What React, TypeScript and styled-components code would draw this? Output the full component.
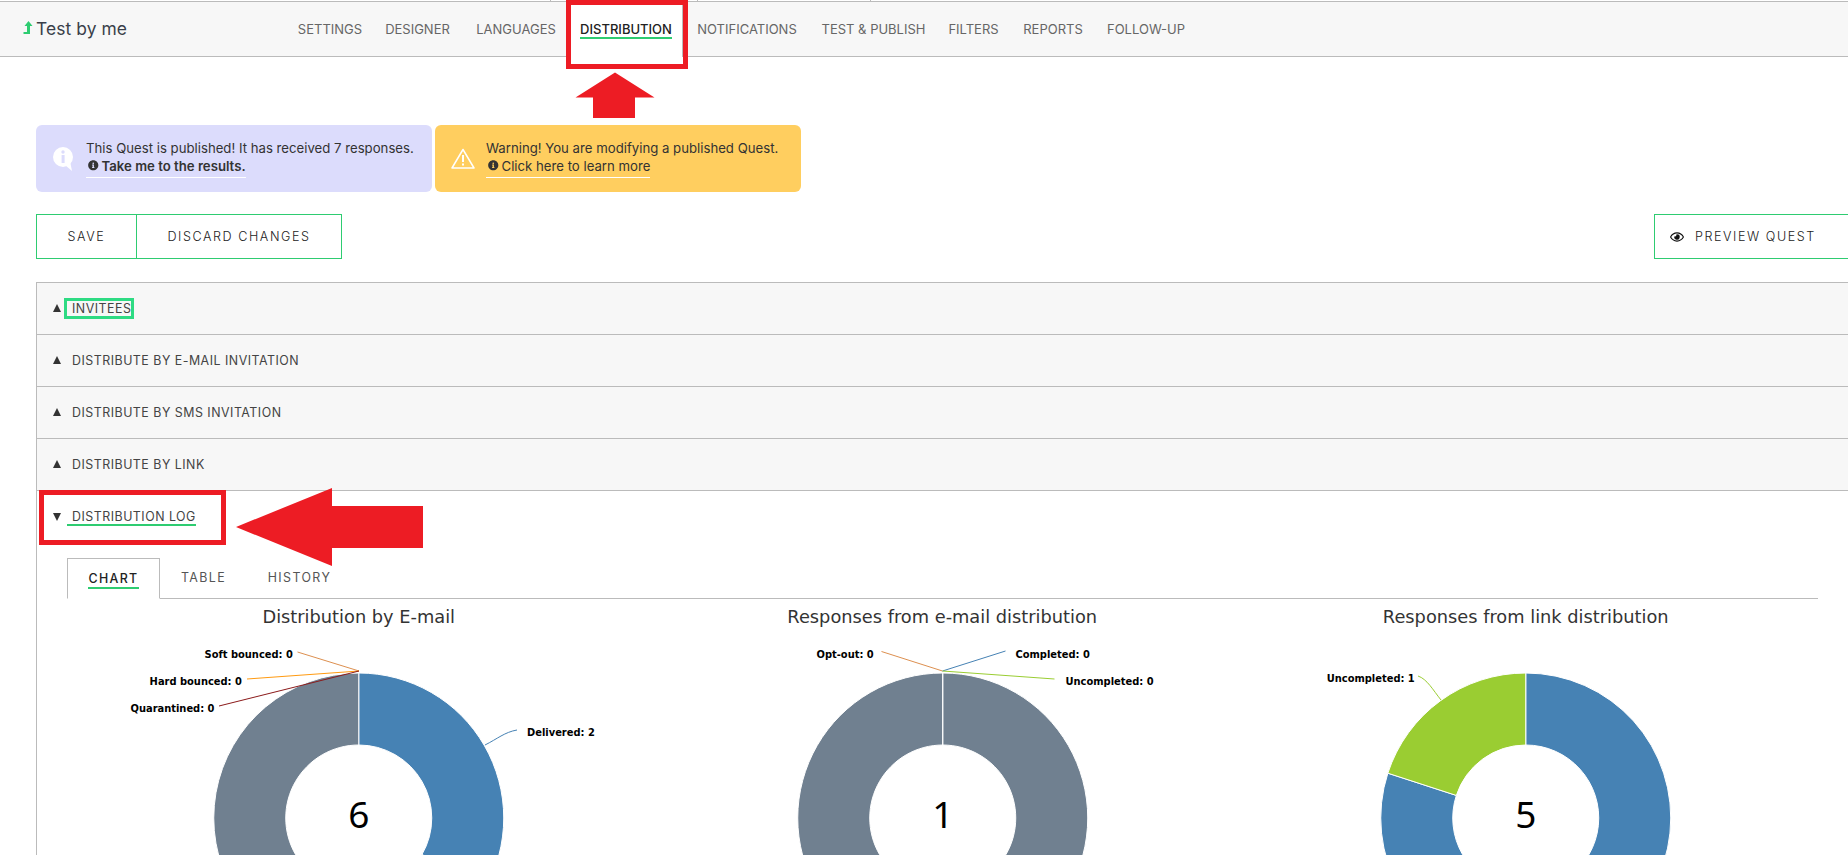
import React from "react";
import styled, { createGlobalStyle } from "styled-components";
import { FaInfoCircle, FaRegEye } from "react-icons/fa";

const GREEN = "#2ecc71";
const LINE = "#bbbbbb";
const UI = `Inter, "Liberation Sans", sans-serif`;
const CHART = `"DejaVu Sans", sans-serif`;

const Global = createGlobalStyle`
  html, body { margin: 0; padding: 0; background: #fff; overflow: hidden; }
  body { font-family: ${UI}; color: #333; }
  * { box-sizing: border-box; }
`;

const Page = styled.div`
  position: relative;
  width: 1848px;
  height: 855px;
  overflow: hidden;
`;

const TopStrip = styled.div`
  position: relative;
  height: 1px;
`;

const Tick = styled.i<{ $x: number }>`
  position: absolute;
  left: ${(p) => p.$x}px;
  top: 0;
  width: 1px;
  height: 1px;
  background: ${LINE};
`;

const TopBar = styled.header`
  height: 56px;
  display: flex;
  align-items: stretch;
  background: #f7f7f7;
  border-top: 1px solid ${LINE};
  border-bottom: 1px solid ${LINE};
  padding-left: 23px;
`;

const Brand = styled.div`
  display: flex;
  align-items: center;
  gap: 3px;
  width: 264px;
  padding-bottom: 2px;
  font-size: 17.4px;
  letter-spacing: 0.1px;
  color: #3a3f4a;
`;

const Nav = styled.nav`
  display: flex;
  align-items: stretch;
`;

const NavItem = styled.div<{ $active?: boolean; $w: number }>`
  width: ${(p) => p.$w}px;
  display: flex;
  justify-content: center;
  padding-top: 20px;
  font-size: 13px;
  line-height: 15px;
  color: ${(p) => (p.$active ? "#222" : "#666")};
  background: ${(p) => (p.$active ? "#fff" : "transparent")};
  border-right: ${(p) => (p.$active ? `1px solid ${LINE}` : "0")};
  margin-bottom: ${(p) => (p.$active ? "-1px" : "0")};
  font-weight: ${(p) => (p.$active ? 500 : 400)};
  white-space: nowrap;
`;

const NavLabel = styled.span<{ $active?: boolean }>`
  display: inline-block;
  height: 17px;
  border-bottom: ${(p) => (p.$active ? `2px solid ${GREEN}` : "0")};
`;

const Main = styled.main`
  width: 1830px;
  margin-left: 36px;
`;

const Alerts = styled.section`
  display: flex;
  gap: 3px;
  padding-top: 68px;
`;

const Alert = styled.div<{ $bg: string; $w: number; $pad: number }>`
  width: ${(p) => p.$w}px;
  height: 67px;
  display: flex;
  align-items: center;
  padding-left: ${(p) => p.$pad}px;
  background: ${(p) => p.$bg};
  border-radius: 6px;
  font-size: 13.2px;
  color: #333;
`;

const AlertIcon = styled.svg<{ $gap: number }>`
  flex: none;
  margin-right: ${(p) => p.$gap}px;
`;

const AlertBody = styled.div`
  line-height: 18px;
  white-space: nowrap;
`;

const AlertLink = styled.span<{ $bold?: boolean }>`
  display: inline-flex;
  align-items: center;
  gap: 3px;
  height: 21px;
  padding: 0 0 3px 2px;
  border-bottom: 1px solid #fff;
  font-weight: ${(p) => (p.$bold ? 600 : 400)};
  svg {
    font-size: 10.5px;
  }
`;

const Actions = styled.section`
  display: flex;
  justify-content: space-between;
  padding-top: 22px;
`;

const ButtonGroup = styled.div`
  display: flex;
  height: 45px;
  border: 1px solid ${GREEN};
`;

const ActionButton = styled.div<{ $w: number; $divider?: boolean }>`
  width: ${(p) => p.$w}px;
  display: flex;
  align-items: center;
  justify-content: center;
  font-size: 12.6px;
  font-weight: 300;
  letter-spacing: 1.55px;
  color: #222;
  border-left: ${(p) => (p.$divider ? `1px solid ${GREEN}` : "0")};
`;

const PreviewButton = styled.div`
  width: 212px;
  height: 45px;
  display: flex;
  align-items: center;
  gap: 11px;
  padding-left: 15px;
  border: 1px solid ${GREEN};
  font-size: 12.6px;
  font-weight: 300;
  letter-spacing: 1.55px;
  color: #222;
  svg {
    font-size: 14px;
    color: #111;
  }
`;

const Accordion = styled.section`
  margin-top: 23px;
  border-top: 1px solid ${LINE};
  border-left: 1px solid ${LINE};
`;

const Row = styled.div<{ $open?: boolean }>`
  height: 52px;
  display: flex;
  align-items: center;
  gap: 11px;
  padding-left: 16px;
  padding-bottom: 1px;
  font-size: 12.4px;
  letter-spacing: 0.5px;
  color: #444;
  background: ${(p) => (p.$open ? "#fff" : "#f7f7f7")};
  border-bottom: ${(p) => (p.$open ? "0" : `1px solid ${LINE}`)};
`;

const Caret = styled.i<{ $open?: boolean }>`
  flex: none;
  width: 0;
  height: 0;
  border-left: 4px solid transparent;
  border-right: 4px solid transparent;
  ${(p) =>
    p.$open ? "border-top: 8px solid #333;" : "border-bottom: 8px solid #333;"}
`;

const Focused = styled.span`
  padding: 1px 0 1px 5px;
  margin-left: -5px;
  line-height: 13px;
  outline: 3px solid #2edb83;
`;

const Underlined = styled.span`
  padding-left: 5px;
  margin-left: -5px;
  height: 17px;
  line-height: 15px;
  border-bottom: 2px solid ${GREEN};
  margin-top: 1px;
`;

const Panel = styled.div`
  padding: 15px 48px 0 30px;
`;

const Tabs = styled.div`
  height: 41px;
  display: flex;
  border-bottom: 1px solid ${LINE};
`;

const Tab = styled.div<{ $active?: boolean; $w: number }>`
  width: ${(p) => p.$w}px;
  height: ${(p) => (p.$active ? "41px" : "40px")};
  display: flex;
  justify-content: center;
  padding-top: 12px;
  font-size: 12.4px;
  letter-spacing: 1.4px;
  color: ${(p) => (p.$active ? "#222" : "#555")};
  font-weight: ${(p) => (p.$active ? 500 : 400)};
  background: #fff;
  ${(p) =>
    p.$active
      ? `border: 1px solid ${LINE}; border-bottom: 1px solid #fff;`
      : ""}
`;

const TabLabel = styled.span<{ $active?: boolean }>`
  height: 18px;
  line-height: 16px;
  border-bottom: ${(p) => (p.$active ? `2px solid ${GREEN}` : "0")};
`;

const Charts = styled.div`
  display: grid;
  grid-template-columns: repeat(3, 583.5px);
`;

const ChartBlock = styled.figure`
  margin: 0;
`;

const ChartTitle = styled.figcaption`
  height: 36px;
  line-height: 36px;
  text-align: center;
  font-family: ${CHART};
  font-size: 17.8px;
  color: #333;
`;

const ChartSvg = styled.svg`
  display: block;
  overflow: visible;
`;

const Label = styled.text`
  font-family: "DejaVu Sans Condensed", "DejaVu Sans", sans-serif;
  font-size: 11px;
  font-weight: 700;
  fill: #000;
`;

const Total = styled.text`
  font-family: "Noto Sans", sans-serif;
  font-size: 37px;
  fill: #000;
`;

const Annotation = styled.div<{ $x: number; $y: number; $w: number; $h: number }>`
  position: absolute;
  left: ${(p) => p.$x}px;
  top: ${(p) => p.$y}px;
  width: ${(p) => p.$w}px;
  height: ${(p) => p.$h}px;
  border: 5px solid #ed1c24;
`;

const AnnotationArrow = styled.svg<{ $x: number; $y: number }>`
  position: absolute;
  left: ${(p) => p.$x}px;
  top: ${(p) => p.$y}px;
`;

const STEEL = "#4682b4";
const SLATE = "#708090";
const LIME = "#9acd32";
const PERU = "#dd9050";

const CX = 291.75;
const CY = 183;
const OUTER = 145;
const INNER = 73;

function point(r: number, deg: number) {
  const a = (deg * Math.PI) / 180;
  return `${(CX + r * Math.sin(a)).toFixed(2)} ${(CY - r * Math.cos(a)).toFixed(2)}`;
}

function slice(from: number, to: number) {
  const large = to - from > 180 ? 1 : 0;
  return `M${point(OUTER, from)} A${OUTER} ${OUTER} 0 ${large} 1 ${point(OUTER, to)} L${point(INNER, to)} A${INNER} ${INNER} 0 ${large} 0 ${point(INNER, from)} Z`;
}

type Slice = { from: number; to: number; color: string };
type Leader = { d: string; color: string };
type Lbl = { x: number; y: number; text: string };

type ChartData = {
  title: string;
  total: string;
  slices: Slice[];
  leaders: Leader[];
  labels: Lbl[];
  origin: number;
};

const OY = 635;

const charts: ChartData[] = [
  {
    title: "Distribution by E-mail",
    total: "6",
    origin: 67,
    slices: [
      { from: 0, to: 120, color: STEEL },
      { from: 120, to: 360, color: SLATE },
    ],
    leaders: [
      { d: "M297.5 652 L359 671", color: PERU },
      { d: "M247 679 L359 671", color: "#ff9a10" },
      { d: "M219 706 L359 671", color: "#8b1a1a" },
      { d: "M517 730 C505 732 497 739 485 745", color: STEEL },
    ],
    labels: [
      { x: 204.5, y: 658, text: "Soft bounced: 0" },
      { x: 149.6, y: 685, text: "Hard bounced: 0" },
      { x: 130.5, y: 712, text: "Quarantined: 0" },
      { x: 527, y: 736, text: "Delivered: 2" },
    ],
  },
  {
    title: "Responses from e-mail distribution",
    total: "1",
    origin: 650.5,
    slices: [{ from: 0, to: 359.99, color: SLATE }],
    leaders: [
      { d: "M881 651.5 L942 671", color: PERU },
      { d: "M1005 651 L942 671", color: STEEL },
      { d: "M1054 679 L942 671", color: LIME },
    ],
    labels: [
      { x: 816, y: 658, text: "Opt-out: 0" },
      { x: 1015, y: 658, text: "Completed: 0" },
      { x: 1065, y: 685, text: "Uncompleted: 0" },
    ],
  },
  {
    title: "Responses from link distribution",
    total: "5",
    origin: 1234,
    slices: [
      { from: 0, to: 288, color: STEEL },
      { from: 288, to: 360, color: LIME },
    ],
    leaders: [{ d: "M1418 676 C1427 679 1433 690 1441 700", color: LIME }],
    labels: [{ x: 1326.7, y: 682, text: "Uncompleted: 1" }],
  },
];

const Chart = ({ data }: { data: ChartData }) => (
  <ChartBlock>
    <ChartTitle>{data.title}</ChartTitle>
    <ChartSvg width="583.5" height="260" viewBox="0 0 583.5 260">
      {data.slices.map((s) => (
        <path key={s.from} d={slice(s.from, s.to)} fill={s.color} stroke="#fff" strokeWidth="1" />
      ))}
      <g transform={`translate(${-data.origin} ${-OY})`}>
        {data.leaders.map((l) => (
          <path key={l.d} d={l.d} fill="none" stroke={l.color} strokeWidth="1" />
        ))}
        {data.labels.map((l) => (
          <Label key={l.text} x={l.x} y={l.y}>
            {l.text}
          </Label>
        ))}
      </g>
      <Total x={CX} y={CY + 10} textAnchor="middle">
        {data.total}
      </Total>
    </ChartSvg>
  </ChartBlock>
);

const navItems: [string, number][] = [
  ["SETTINGS", 86],
  ["DESIGNER", 89],
  ["LANGUAGES", 108],
  ["DISTRIBUTION", 113],
  ["NOTIFICATIONS", 128],
  ["TEST & PUBLISH", 125],
  ["FILTERS", 75],
  ["REPORTS", 84],
  ["FOLLOW-UP", 102],
];

export default function App() {
  return (
    <Page>
      <Global />
      <TopStrip>
        <Tick $x={550} />
        <Tick $x={697} />
        <Tick $x={870} />
      </TopStrip>
      <TopBar>
        <Brand>
          <svg width="10" height="14" viewBox="0 0 10 14">
            <path d="M5.5 0 L9.5 5 L7 5 L7 13 L0.5 13 L0.5 11 L4 11 L4 5 L1.5 5 Z" fill="#2ecc71" />
          </svg>
          Test by me
        </Brand>
        <Nav>
          {navItems.map(([t, w]) => {
            const a = t === "DISTRIBUTION";
            return (
              <NavItem key={t} $active={a} $w={w}>
                <NavLabel $active={a}>{t}</NavLabel>
              </NavItem>
            );
          })}
        </Nav>
      </TopBar>
      <Main>
        <Alerts>
          <Alert $bg="#dcdcfc" $w={396} $pad={17}>
            <AlertIcon $gap={13} width="20" height="24" viewBox="0 0 20 24">
              <circle cx="10" cy="10" r="10" fill="#fff" />
              <path d="M12 18 L19 24 L17 14 Z" fill="#fff" />
              <rect x="8.6" y="8" width="3" height="8" fill="#dcdcfc" />
              <circle cx="10" cy="5" r="1.7" fill="#dcdcfc" />
            </AlertIcon>
            <AlertBody>
              <div>This Quest is published! It has received 7 responses.</div>
              <AlertLink $bold>
                <FaInfoCircle /> Take me to the results.
              </AlertLink>
            </AlertBody>
          </Alert>
          <Alert $bg="#ffce5f" $w={366} $pad={16}>
            <AlertIcon $gap={11} width="24" height="21" viewBox="0 0 24 21">
              <path d="M12 1.5 L23 20 L1 20 Z" fill="none" stroke="#fff" strokeWidth="1.5" strokeLinejoin="round" />
              <rect x="11" y="7" width="2" height="7" fill="#fff" />
              <rect x="11" y="15.5" width="2" height="2" fill="#fff" />
            </AlertIcon>
            <AlertBody>
              <div>Warning! You are modifying a published Quest.</div>
              <AlertLink>
                <FaInfoCircle /> Click here to learn more
              </AlertLink>
            </AlertBody>
          </Alert>
        </Alerts>
        <Actions>
          <ButtonGroup>
            <ActionButton $w={99}>SAVE</ActionButton>
            <ActionButton $w={205} $divider>
              DISCARD CHANGES
            </ActionButton>
          </ButtonGroup>
          <PreviewButton>
            <FaRegEye />
            PREVIEW QUEST
          </PreviewButton>
        </Actions>
        <Accordion>
          <Row>
            <Caret />
            <Focused>INVITEES</Focused>
          </Row>
          <Row>
            <Caret />
            DISTRIBUTE BY E-MAIL INVITATION
          </Row>
          <Row>
            <Caret />
            DISTRIBUTE BY SMS INVITATION
          </Row>
          <Row>
            <Caret />
            DISTRIBUTE BY LINK
          </Row>
          <Row $open>
            <Caret $open />
            <Underlined>DISTRIBUTION LOG</Underlined>
          </Row>
          <Panel>
            <Tabs>
              <Tab $active $w={93}>
                <TabLabel $active>CHART</TabLabel>
              </Tab>
              <Tab $w={87}>
                <TabLabel>TABLE</TabLabel>
              </Tab>
              <Tab $w={105}>
                <TabLabel>HISTORY</TabLabel>
              </Tab>
            </Tabs>
            <Charts>
              {charts.map((c) => (
                <Chart key={c.title} data={c} />
              ))}
            </Charts>
          </Panel>
        </Accordion>
      </Main>
      <Annotation $x={566} $y={0} $w={122} $h={69} />
      <Annotation $x={39} $y={490} $w={187} $h={55} />
      <AnnotationArrow $x={575} $y={72} width="80" height="47" viewBox="0 0 80 47">
        <path d="M40 0.5 L79.5 25.5 L60 25.5 L60 46 L18 46 L18 25.5 L0.5 25.5 Z" fill="#ed1c24" />
      </AnnotationArrow>
      <AnnotationArrow $x={236} $y={488} width="188" height="79" viewBox="0 0 188 79">
        <path d="M0 39 L96 0 L96 18 L187 18 L187 60 L96 60 L96 78 Z" fill="#ed1c24" />
      </AnnotationArrow>
    </Page>
  );
}
